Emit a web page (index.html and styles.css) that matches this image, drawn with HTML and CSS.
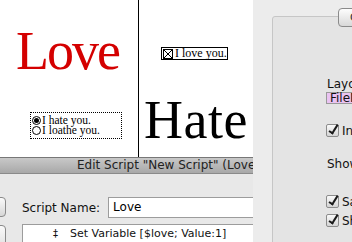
FILE: index.html
```html
<!DOCTYPE html>
<html lang="en">

<head>
  <meta charset="UTF-8">
  <title>Love / Hate</title>
  <link rel="stylesheet" href="styles.css">
</head>

<body>
  <div class="stage">
    <!-- layout canvas, left part -->
    <div class="canvas canvas-left">
      <div class="big-word love">Love</div>
      <div class="radio-group">
        <div class="radio-row"><span class="radio on"></span>I hate you.</div>
        <div class="radio-row"><span class="radio"></span>I loathe you.</div>
      </div>
    </div>

    <!-- layout canvas, right part -->
    <div class="canvas canvas-right">
      <div class="check-field"><span class="xbox"></span>I love you.</div>
      <div class="big-word hate">Hate</div>
    </div>

    <!-- inspector panel -->
    <div class="inspector">
      <div class="tab-btn">C</div>
      <div class="group-box">
        <div class="insp-label">Layout</div>
        <div class="insp-field">FileMaker</div>
        <div class="insp-check"><span class="mac-check"></span>Include</div>
        <div class="insp-label show">Show</div>
        <div class="insp-check"><span class="mac-check"></span>Save</div>
        <div class="insp-check"><span class="mac-check"></span>Show</div>
      </div>
    </div>

    <!-- script window -->
    <div class="script-window">
      <div class="titlebar">Edit Script "New Script" (Love)</div>
      <div class="win-body">
        <div class="side-btn first"></div>
        <div class="side-btn second"></div>
        <div class="name-row">
          <span class="name-label">Script Name:</span>
          <div class="name-input">Love</div>
        </div>
        <div class="steps">
          <div class="step"><span class="grip">&#8225;</span>Set Variable [$love; Value:1]</div>
        </div>
      </div>
    </div>
  </div>
</body>

</html>
```

FILE: styles.css
```css
/* Base */
body {
  margin: 0;
  padding: 0;
  font-family: "DejaVu Sans", Arial, sans-serif;
}

.stage {
  position: relative;
  width: 352px;
  height: 242px;
  overflow: hidden;
  background-color: #fff;
}

/* Layout canvases */
.canvas {
  position: absolute;
  top: 0;
  height: 160px;
  background-color: #fff;
  font-family: "Liberation Serif", "Times New Roman", serif;
}

.canvas-left {
  left: 0;
  width: 138px;
  border-right: 1px solid #000;
}

.canvas-right {
  left: 139px;
  width: 114px;
}

.big-word {
  position: absolute;
  font-size: 54px;
  line-height: 54px;
  white-space: nowrap;
}

.love {
  left: 16px;
  top: 24px;
  color: #d40000;
  letter-spacing: -2px;
}

.hate {
  left: 5px;
  top: 93px;
  color: #000;
  letter-spacing: 0.5px;
}

.radio-group {
  position: absolute;
  left: 30px;
  top: 112px;
  width: 90px;
  height: 23px;
  border: 1px dotted #000;
  font-size: 11.5px;
  padding-top: 2px;
}

.radio-row {
  display: flex;
  align-items: center;
  height: 10px;
  line-height: 10px;
  white-space: nowrap;
}

.radio {
  flex-shrink: 0;
  width: 7px;
  height: 7px;
  border: 1px solid #000;
  border-radius: 50%;
  margin: 0 1px;
  position: relative;
}

.radio.on::after {
  content: "";
  position: absolute;
  left: 1px;
  top: 1px;
  width: 5px;
  height: 5px;
  border-radius: 50%;
  background-color: #000;
}

.check-field {
  position: absolute;
  left: 22px;
  top: 47px;
  width: 65px;
  height: 11px;
  border: 1px solid #000;
  font-size: 12px;
  line-height: 11px;
  display: flex;
  align-items: center;
  white-space: nowrap;
}

.xbox {
  flex-shrink: 0;
  width: 8px;
  height: 8px;
  border: 1px solid #000;
  margin: 0 2px 0 1px;
  background:
    linear-gradient(45deg, transparent 44%, #000 44%, #000 56%, transparent 56%),
    linear-gradient(-45deg, transparent 44%, #000 44%, #000 56%, transparent 56%);
}

/* Inspector */
.inspector {
  position: absolute;
  left: 253px;
  top: 0;
  width: 99px;
  height: 242px;
  overflow: hidden;
  background-color: #ececec;
}

.tab-btn {
  position: absolute;
  left: 85px;
  top: 8px;
  width: 30px;
  height: 17px;
  border: 1px solid #8a8a8a;
  border-radius: 4px;
  background: linear-gradient(#fdfdfd, #d8d8d8);
  font-size: 11px;
  line-height: 17px;
  padding-left: 11px;
  color: #333;
  z-index: 1;
}

.group-box {
  position: absolute;
  left: 19px;
  top: 16px;
  width: 200px;
  height: 240px;
  border: 1px solid #c6c6c6;
  border-radius: 3px;
  background-color: #e4e4e4;
  padding: 60px 0 0 54px;
  box-sizing: border-box;
  font-size: 12px;
  color: #111;
  white-space: nowrap;
}

.insp-label {
  line-height: 14px;
  height: 15px;
}

.insp-label.show {
  margin-top: 20px;
  margin-bottom: 23px;
}

.insp-field {
  width: 60px;
  margin-left: -1px;
  height: 10px;
  line-height: 10px;
  padding: 0 3px;
  border: 1px solid #9a9a9a;
  background-color: #eac3f2;
  margin-bottom: 20px;
}

.insp-check {
  display: flex;
  align-items: center;
  height: 13px;
  margin-bottom: 6px;
  margin-left: -1px;
}

.mac-check {
  flex-shrink: 0;
  width: 11px;
  height: 11px;
  border: 1px solid #8c8c8c;
  border-radius: 2px;
  background: linear-gradient(#fafafa, #d4d4d4);
  margin-right: 3px;
  position: relative;
}

.mac-check::after {
  content: "";
  position: absolute;
  left: 4px;
  top: -2px;
  width: 3px;
  height: 9px;
  border: solid #1a1a1a;
  border-width: 0 2px 2px 0;
  transform: rotate(32deg);
}

/* Script window */
.script-window {
  position: absolute;
  left: 0;
  top: 157px;
  width: 253px;
  height: 85px;
  background-color: #e8e8e8;
}

.titlebar {
  height: 15px;
  line-height: 15px;
  border-top: 1px solid #777;
  border-bottom: 1px solid #8a8a8a;
  background: linear-gradient(#c8c8c8, #a8a8a8);
  font-size: 12px;
  color: #222;
  padding-left: 77px;
  white-space: nowrap;
  overflow: hidden;
}

.win-body {
  position: relative;
  height: 68px;
}

.side-btn {
  position: absolute;
  left: -10px;
  width: 14px;
  border: 1px solid #8a8a8a;
  border-radius: 4px;
  background: linear-gradient(#fafafa, #d6d6d6);
}

.side-btn.first {
  top: 23px;
  height: 18px;
}

.side-btn.second {
  top: 51px;
  height: 30px;
}

.name-row {
  display: flex;
  align-items: center;
  padding: 23px 0 0 22px;
  white-space: nowrap;
}

.name-label {
  font-size: 12px;
  color: #111;
  margin-right: 8px;
}

.name-input {
  flex: 1;
  height: 19px;
  line-height: 19px;
  border: 1px solid #9c9c9c;
  border-right: none;
  background-color: #fff;
  font-size: 12px;
  padding-left: 4px;
}

.steps {
  margin: 6px 0 0 22px;
  height: 30px;
  border: 1px solid #9c9c9c;
  border-right: none;
  background-color: #fff;
  font-size: 11px;
  color: #111;
  white-space: nowrap;
}

.step {
  padding: 2px 0 0 30px;
}

.grip {
  display: inline-block;
  width: 17px;
  font-size: 10px;
}
```
